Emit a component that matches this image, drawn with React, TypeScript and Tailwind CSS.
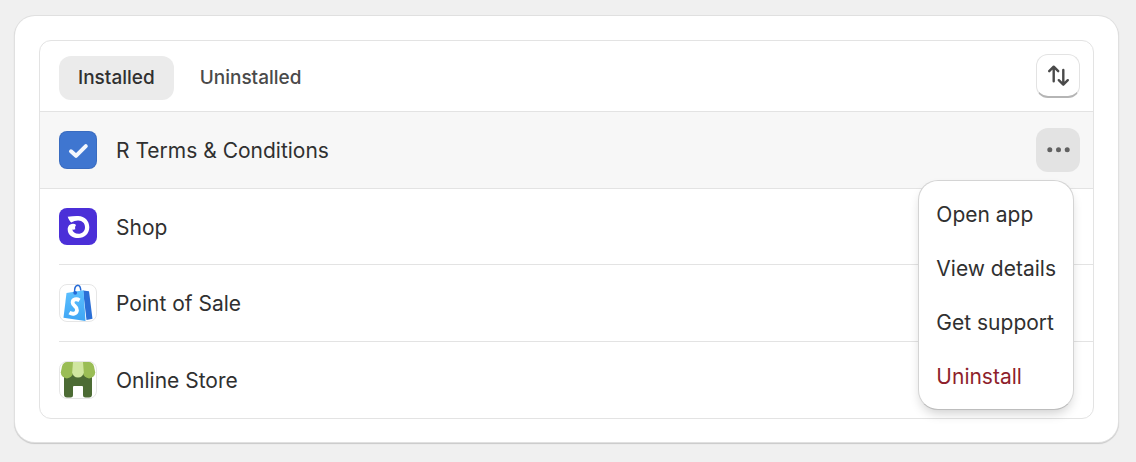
import { useState, type ReactNode } from "react";
import clsx from "clsx";

interface InstalledApp {
  name: string;
  icon: ReactNode;
}

function TermsIcon() {
  return (
    <svg viewBox="0 0 38 38" className="size-[38px] shrink-0" aria-hidden="true">
      <rect width="38" height="38" rx="8" fill="#3a6cc0" />
      <rect x="1" y="1" width="36" height="36" rx="7" fill="#3f76d0" />
      <path
        d="M12 20.3l5 4.500 9.800-9.700"
        fill="none"
        stroke="#f3f7fd"
        strokeWidth="4"
        strokeLinecap="round"
        strokeLinejoin="round"
      />
    </svg>
  );
}

function ShopIcon() {
  return (
    <svg viewBox="0 0 38 38" className="size-[38px] shrink-0" aria-hidden="true">
      <rect width="38" height="37" rx="8" fill="#4b2fd8" />
      <path
        d="M8.700 8.800C12.500 8 16 7.800 19.300 7.900C25.800 8 30.300 12.800 30.300 19.200C30.300 25.500 25.700 30 19.300 30C13 30 8.700 26.400 8.700 21.400C8.700 18 10.800 15.800 14 15.700C15.200 15.700 16.300 16.100 17.100 16.900C16 18 15.900 19.500 16.300 21.200C15.500 21.600 14.300 21.700 13.300 21.600C13.700 24.200 16.100 25.800 19.400 25.800C23.200 25.800 26 23.100 26 19.200C26 15.300 23.300 12.800 19.400 12.600C17 12.500 14.500 13.200 12.300 14.600C10.800 13.200 9.500 11.300 8.700 8.800Z"
        fill="#fff"
      />
    </svg>
  );
}

function PointOfSaleIcon() {
  return (
    <svg viewBox="0 0 38 38" className="size-[38px] shrink-0" aria-hidden="true">
      <defs>
        <linearGradient id="bag" x1="0" y1="0" x2="0" y2="1">
          <stop offset="0" stopColor="#5cc0ff" />
          <stop offset="1" stopColor="#3fa5f4" />
        </linearGradient>
      </defs>
      <rect x="0.500" y="0.500" width="37" height="37" rx="7.500" fill="#fff" stroke="#e6e6e6" />
      <path d="M24 6.500l6 .800 3.500 27.500-6 1.200z" fill="#2b6fd6" />
      <path d="M7.500 9L24.500 6.200 26.500 37 4.500 33.800z" fill="url(#bag)" />
      <path
        d="M15.600 8.500C15.300 4.500 16.300 1.300 18.800 1.200C21 1.200 21.600 3.500 21.800 6.500"
        fill="none"
        stroke="#2469d6"
        strokeWidth="1.500"
      />
      <circle cx="16.200" cy="8.800" r="1.900" fill="#2469d6" />
      <path
        d="M20.500 16.300C17.500 14.400 13.600 15.200 13.600 18.500C13.600 22 18.400 22.300 18 26.200C17.600 30 13.600 30.500 10.400 28.700"
        fill="none"
        stroke="#fff"
        strokeWidth="3.800"
      />
    </svg>
  );
}

function OnlineStoreIcon() {
  return (
    <svg viewBox="0 0 38 38" className="size-[38px] shrink-0" aria-hidden="true">
      <rect x="0.500" y="0.500" width="37" height="37" rx="7.500" fill="#fff" stroke="#e6e6e6" />
      <path
        d="M5 11h28v22.500a3 3 0 0 1-3 3h-3.500a2.500 2.500 0 0 1-2.500-2.500v-8a1 1 0 0 0-1-1h-8a1 1 0 0 0-1 1v8a2.500 2.500 0 0 1-2.500 2.500H8a3 3 0 0 1-3-3z"
        fill="#4c6b34"
      />
      <path d="M8 1h6v10.300a5.800 5.800 0 0 1-12.200 0L3 5.500C3.800 2.500 5.500 1 8 1z" fill="#9abd55" />
      <path d="M30 1h-6v10.300a5.800 5.800 0 0 0 12.200 0L35 5.500C34.200 2.500 32.500 1 30 1z" fill="#9abd55" />
      <path d="M14 1h10l.800 10.300a5.800 5.300 0 0 1-11.600 0z" fill="#d0e6a0" />
    </svg>
  );
}

function SortIcon() {
  return (
    <svg
      viewBox="0 0 24 24"
      className="size-6"
      fill="none"
      stroke="#4a4a4a"
      strokeWidth="2.400"
      strokeLinecap="round"
      strokeLinejoin="round"
      aria-hidden="true"
    >
      <path d="M7.700 17.300V2.800M3.200 7.200l4.500-4.500 4.500 4.500" />
      <path d="M17.300 6v14.500M12.800 16.200l4.500 4.500 4.500-4.500" />
    </svg>
  );
}

function MoreIcon() {
  return (
    <svg viewBox="0 0 24 24" className="size-6" fill="#616161" aria-hidden="true">
      <circle cx="3.800" cy="11.700" r="2.500" />
      <circle cx="12.500" cy="11.700" r="2.500" />
      <circle cx="21.200" cy="11.700" r="2.500" />
    </svg>
  );
}

const tabs = ["Installed", "Uninstalled"];

const apps: InstalledApp[] = [
  { name: "R Terms & Conditions", icon: <TermsIcon /> },
  { name: "Shop", icon: <ShopIcon /> },
  { name: "Point of Sale", icon: <PointOfSaleIcon /> },
  { name: "Online Store", icon: <OnlineStoreIcon /> },
];

const actions = [
  { label: "Open app", destructive: false },
  { label: "View details", destructive: false },
  { label: "Get support", destructive: false },
  { label: "Uninstall", destructive: true },
];

function ActionsMenu() {
  return (
    <div
      role="menu"
      className="absolute top-full right-[6px] z-10 mt-2 flex flex-col rounded-[20px] border border-[#d4d4d4] border-b-[#bdbdbd] bg-white p-[6px] shadow-[0_6px_12px_-3px_rgba(0,0,0,0.2)]"
    >
      {actions.map((action) => (
        <button
          key={action.label}
          type="button"
          role="menuitem"
          className={clsx(
            "rounded-xl px-[11px] pt-[13px] pb-[11px] text-left text-[21px] leading-[30px] whitespace-nowrap hover:bg-[#f7f7f7]",
            action.destructive ? "text-[#8e1f2b]" : "text-[#303030]"
          )}
        >
          {action.label}
        </button>
      ))}
    </div>
  );
}

export default function App() {
  const [activeTab, setActiveTab] = useState("Installed");
  const [menuOpen, setMenuOpen] = useState(true);

  return (
    <main className="min-h-screen bg-[#f0f0f0] pt-4 pr-[18px] pb-[18px] pl-[15px] font-['Inter',sans-serif] text-[#303030]">
      <div className="rounded-[20px] bg-white px-6 pt-6 pb-[23px] shadow-[0_0_0_1px_#e0e0e0,0_1px_1px_1px_#c8c8c8]">
        <div className="rounded-xl border border-[#e3e3e3]">
          <div className="flex items-center justify-between border-b border-[#e3e3e3] py-[11px] pr-[13px] pl-[19px]">
            <div role="tablist" className="mt-1 flex gap-[7px]">
              {tabs.map((tab) => (
                <button
                  key={tab}
                  type="button"
                  role="tab"
                  aria-selected={tab === activeTab}
                  onClick={() => setActiveTab(tab)}
                  className={clsx(
                    "h-11 rounded-xl px-[19px] pt-px text-[19px] font-medium",
                    tab === activeTab ? "bg-[#ebebeb] text-[#303030]" : "text-[#4a4a4a]"
                  )}
                >
                  {tab}
                </button>
              ))}
            </div>
            <button
              type="button"
              aria-label="Sort"
              className="flex size-11 items-center justify-center rounded-xl border border-[#e3e3e3] border-b-2 border-b-[#b5b5b5] bg-white"
            >
              <SortIcon />
            </button>
          </div>

          <ul>
            {apps.map((app, index) => (
              <li
                key={app.name}
                className={clsx(
                  "pl-[19px]",
                  index === 0 && "border-b border-[#e3e3e3] bg-[#f7f7f7]"
                )}
              >
                <div
                  className={clsx(
                    "flex items-center gap-[19px] pr-[13px]",
                    index === 2 ? "h-[77px]" : "h-[76px]",
                    index > 0 && index < apps.length - 1 && "border-b border-[#e3e3e3]"
                  )}
                >
                  {app.icon}
                  <span className="flex-1 pt-[2px] text-[21px] leading-[30px]">{app.name}</span>
                  {index === 0 && (
                    <div className="relative">
                      <button
                        type="button"
                        aria-label="More actions"
                        aria-expanded={menuOpen}
                        onClick={() => setMenuOpen(!menuOpen)}
                        className="flex size-11 items-center justify-center rounded-xl bg-[#e3e3e3]"
                      >
                        <MoreIcon />
                      </button>
                      {menuOpen && <ActionsMenu />}
                    </div>
                  )}
                </div>
              </li>
            ))}
          </ul>
        </div>
      </div>
    </main>
  );
}
